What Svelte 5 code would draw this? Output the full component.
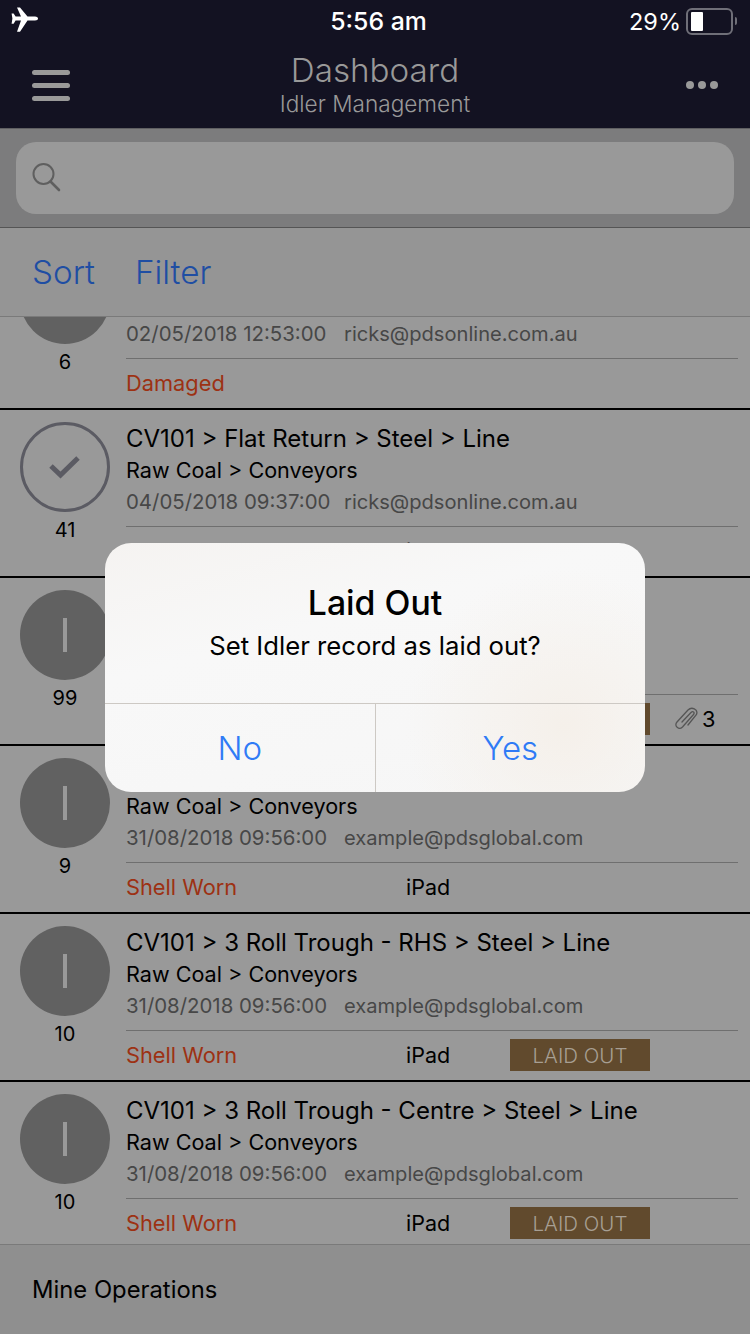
<script>
  const rows = [
    { title: 'CV101 > 3 Roll Trough - LHS > Steel > Line', date: '02/05/2018 12:53:00', user: 'ricks@pdsonline.com.au', count: 6, fault: 'Damaged' },
    { title: 'CV101 > Flat Return > Steel > Line', date: '04/05/2018 09:37:00', user: 'ricks@pdsonline.com.au', count: 41, done: true, fault: 'Shell Worn', device: 'iPad' },
    { title: 'CV101 > Flat Return > Steel > Line', date: '31/08/2018 09:56:00', user: 'example@pdsglobal.com', count: 99, fault: 'Shell Worn', device: 'iPad', laid: true, clips: 3 },
    { title: 'CV101 > 3 Roll Trough - LHS > Steel > Line', date: '31/08/2018 09:56:00', user: 'example@pdsglobal.com', count: 9, fault: 'Shell Worn', device: 'iPad' },
    { title: 'CV101 > 3 Roll Trough - RHS > Steel > Line', date: '31/08/2018 09:56:00', user: 'example@pdsglobal.com', count: 10, fault: 'Shell Worn', device: 'iPad', laid: true },
    { title: 'CV101 > 3 Roll Trough - Centre > Steel > Line', date: '31/08/2018 09:56:00', user: 'example@pdsglobal.com', count: 10, fault: 'Shell Worn', device: 'iPad', laid: true },
  ];
</script>

<div class="page">
  <header class="top">
    <div class="status">
      <svg class="plane" width="30" height="26" viewBox="0 0 30 26">
        <path fill="#fff" d="M6 0.5 L9 0.5 L16.5 9.6 L24 9.6 C28 9.6 28 13.6 24 13.6 L16.5 13.6 L9 24.8 L6 24.8 L10 13.6 L4.6 13.6 L2.6 16.8 L0.6 16.8 L1.4 11.6 L0.6 6.6 L2.6 6.6 L4.6 9.6 L10 9.6 Z" />
      </svg>
      <span class="clock">5:56 am</span>
      <div class="battery">
        <span>29%</span>
        <div class="cell"><div class="charge"></div></div>
        <div class="nub"></div>
      </div>
    </div>
    <div class="nav">
      <div class="burger"><i></i><i></i><i></i></div>
      <div class="heading">
        <div class="h1">Dashboard</div>
        <div class="h2">Idler Management</div>
      </div>
      <div class="more"><i></i><i></i><i></i></div>
    </div>
  </header>

  <div class="searchband">
    <div class="search">
      <svg width="32" height="32" viewBox="0 0 32 32" fill="none" stroke="#5f5f5f">
        <circle cx="13.5" cy="13" r="10" stroke-width="2" />
        <path d="M20.5 20.5 L29 29" stroke-width="2.6" stroke-linecap="round" />
      </svg>
    </div>
  </div>

  <div class="tools">
    <span>Sort</span>
    <span>Filter</span>
  </div>

  <div class="list">
    <div class="scroller">
      {#each rows as row}
        <div class="row">
          <div class="left">
            {#if row.done}
              <div class="dial open">
                <svg width="32" height="24" viewBox="0 0 32 24" fill="none" stroke="#5b5b63" stroke-width="5">
                  <path d="M2 11 L11.5 20 L29 3" />
                </svg>
              </div>
            {:else}
              <div class="dial"><i></i></div>
            {/if}
            <div class="count">{row.count}</div>
          </div>
          <div class="body">
            <div class="title">{row.title}</div>
            <div class="area">Raw Coal &gt; Conveyors</div>
            <div class="meta"><span class="date">{row.date}</span><span class="user">{row.user}</span></div>
            <div class="foot">
              <span class="fault">{row.fault}</span>
              {#if row.device}<span class="device">{row.device}</span>{/if}
              {#if row.laid}<span class="laid">LAID OUT</span>{/if}
              {#if row.clips}
                <span class="clips">
                  <svg width="26" height="24" viewBox="0 0 26 24" fill="none" stroke="#555" stroke-width="1.3" stroke-linecap="round">
                    <path d="M9 15 L18 5.5 C20 3.5 22 5.5 20.5 7.5 L9.5 20 C6 23.5 0.5 19 4 15 L15 3 C18.5 -0.5 25.5 2 23.5 7.5 L15 18" />
                  </svg>
                  {row.clips}
                </span>
              {/if}
            </div>
          </div>
        </div>
      {/each}
    </div>
  </div>

  <footer class="bottom">Mine Operations</footer>

  <div class="alert">
    <div class="copy">
      <div class="a-title">Laid Out</div>
      <div class="a-text">Set Idler record as laid out?</div>
    </div>
    <div class="actions">
      <div>No</div>
      <div>Yes</div>
    </div>
  </div>
</div>

<style>
  :global(body) { margin: 0; background: #999; }
  .page { position: relative; width: 750px; height: 1334px; overflow: hidden; display: flex; flex-direction: column; font-family: Inter, "Noto Sans", sans-serif; color: #000; }

  .top { height: 128px; background: #131222; flex: none; }
  .status { height: 42px; display: flex; align-items: center; justify-content: space-between; position: relative; color: #fff; font-size: 23.5px; padding: 0 13px 0 10px; }
  .plane { margin-top: -3px; margin-left: 1px; }
  .clock { position: absolute; left: 0; right: 0; text-align: center; font-size: 24.8px; font-weight: 500; margin-left: 7px; }
  .battery { display: flex; align-items: center; font-weight: 400; }
  .cell { width: 37px; height: 19px; margin-left: 5px; border: 2px solid #6f6f78; border-radius: 6px; padding: 2px 3px; }
  .charge { width: 12px; height: 100%; background: #fff; border-radius: 1px; }
  .nub { width: 2px; height: 8px; background: #6f6f78; margin-left: 2px; border-radius: 0 3px 3px 0; }

  .nav { display: grid; grid-template-columns: 1fr auto 1fr; align-items: center; height: 86px; padding: 0 32px; }
  .burger { display: flex; flex-direction: column; gap: 8px; width: 38px; }
  .burger i { height: 5px; border-radius: 3px; background: #999; }
  .heading { text-align: center; color: #999; margin-top: -1px; }
  .h1 { font-size: 33.2px; font-weight: 300; line-height: 38px; }
  .h2 { font-size: 22.6px; font-weight: 300; line-height: 30px; }
  .more { display: flex; gap: 4px; justify-self: end; }
  .more i { width: 8px; height: 8px; border-radius: 50%; background: #999; }

  .searchband { height: 100px; flex: none; box-sizing: border-box; background: #7c7c7d; border-top: 1px solid #5f5f62; border-bottom: 1px solid #555; padding: 13px 16px; }
  .search { height: 72px; border-radius: 20px; background: #999; display: flex; align-items: center; padding-left: 14px; }
  .search svg { margin-top: -2px; }

  .tools { height: 89px; flex: none; box-sizing: border-box; background: #959595; border-bottom: 1px solid #7a7a7a; display: flex; align-items: center; gap: 40px; padding: 0 32px; font-size: 33.2px; font-weight: 300; color: #1f4ea3; }

  .list { flex: 1; overflow: hidden; }
  .scroller { margin-top: -75px; }
  .row { height: 168px; box-sizing: border-box; border-bottom: 2px solid #000; display: flex; }
  .row:last-child { border-bottom: none; }
  .left { width: 130px; flex: none; display: flex; flex-direction: column; align-items: center; padding-top: 12px; }
  .dial { width: 90px; height: 90px; box-sizing: border-box; border-radius: 50%; background: #616161; display: flex; align-items: center; justify-content: center; }
  .dial i { width: 4px; height: 34px; background: #999; }
  .dial.open { background: none; border: 3px solid #5b5b63; }
  .count { font-size: 20px; line-height: 24px; margin-top: 6px; }

  .body { flex: 1; padding-right: 12px; box-sizing: border-box; min-width: 0; margin-left: -4px; }
  .title { font-size: 24px; line-height: 30px; margin-top: 14px; white-space: nowrap; }
  .area { font-size: 21.6px; line-height: 30px; margin-top: 1px; }
  .meta { font-size: 20.4px; line-height: 30px; margin-top: 2px; display: flex; color: #474747; }
  .date { width: 218px; flex: none; }
  .user { font-size: 20.1px; }
  .foot { margin-top: 9px; border-top: 1px solid #6f6f6f; height: 48px; box-sizing: border-box; display: flex; align-items: center; font-size: 21.8px; position: relative; }
  .fault { width: 280px; flex: none; color: #9d3113; }
  .device { width: 104px; flex: none; font-size: 21.5px; }
  .laid { position: absolute; left: 384px; top: 8px; width: 140px; height: 32px; display: flex; align-items: center; justify-content: center; background: #614a2d; color: #a79f93; font-size: 20.5px; font-weight: 300; }
  .clips { position: absolute; left: 547px; top: 8px; height: 32px; display: flex; align-items: center; gap: 3px; }

  .bottom { height: 90px; flex: none; box-sizing: border-box; background: #8f8f8f; border-top: 1px solid #7a7a7a; display: flex; align-items: center; padding-left: 32px; font-size: 23.8px; }

  .alert { position: absolute; left: 105px; top: 543px; width: 540px; height: 249px; border-radius: 26px; overflow: hidden; display: flex; flex-direction: column; background: radial-gradient(circle at 85% 74%, #f5f0ea, transparent 32%), linear-gradient(165deg, #f5f3f1, #f8f8f8 35%, #f6f6f6); }
  .copy { height: 161px; flex: none; box-sizing: border-box; border-bottom: 1px solid #cdc9c4; text-align: center; padding-top: 36px; }
  .a-title { font-size: 33.8px; font-weight: 500; line-height: 48px; }
  .a-text { font-size: 25.7px; line-height: 32px; margin-top: 3px; }
  .actions { flex: 1; display: flex; color: #2f7bf6; font-size: 33px; font-weight: 350; }
  .actions div { flex: 1; display: flex; align-items: center; justify-content: center; }
  .actions div + div { border-left: 1px solid #cdc9c4; }
</style>
